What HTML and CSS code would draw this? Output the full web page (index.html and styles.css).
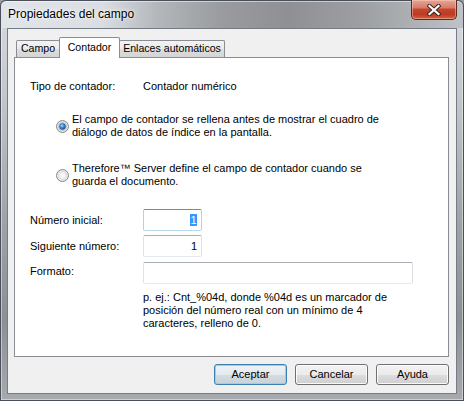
FILE: index.html
```html
<!DOCTYPE html>
<html lang="es">
<head>
<meta charset="utf-8">
<title>Propiedades del campo</title>
<link rel="stylesheet" href="styles.css">
</head>
<body>
<div class="window">
  <div class="titlebar">
    <span class="title">Propiedades del campo</span>
    <div class="close" aria-label="Cerrar">
      <svg width="14" height="12" viewBox="0 0 14 12">
        <path d="M2.5 2 L11.5 10 M11.5 2 L2.5 10" stroke="#3a2520" stroke-width="4.2" stroke-linecap="square" fill="none"/>
        <path d="M2.5 2 L11.5 10 M11.5 2 L2.5 10" stroke="#ffffff" stroke-width="2.2" stroke-linecap="square" fill="none"/>
      </svg>
    </div>
  </div>
  <div class="client">
    <div class="tabs">
      <div class="tab tab-campo">Campo</div>
      <div class="tab tab-contador active">Contador</div>
      <div class="tab tab-enlaces">Enlaces automáticos</div>
    </div>
    <div class="panel">
      <div class="info-row">
        <span class="label">Tipo de contador:</span>
        <span>Contador numérico</span>
      </div>
      <div class="radio-row first">
        <svg class="radio" width="13" height="13" viewBox="0 0 13 13">
          <defs>
            <radialGradient id="rbg" cx="0.5" cy="0.5" r="0.6">
              <stop offset="0" stop-color="#ffffff"/>
              <stop offset="0.6" stop-color="#e8e8e8"/>
              <stop offset="1" stop-color="#cfcfcf"/>
            </radialGradient>
            <radialGradient id="dot" cx="0.4" cy="0.35" r="0.7">
              <stop offset="0" stop-color="#b4e0ff"/>
              <stop offset="0.45" stop-color="#3d8fd8"/>
              <stop offset="1" stop-color="#124f93"/>
            </radialGradient>
          </defs>
          <circle cx="6.5" cy="6.5" r="6" fill="url(#rbg)" stroke="#8a8d91" stroke-width="1"/>
          <circle cx="6.5" cy="6.5" r="4" fill="#e4e6e8" stroke="#b0b4b8" stroke-width="0.8"/>
          <circle cx="6.5" cy="6.5" r="3" fill="url(#dot)" stroke="#2a5d8f" stroke-width="0.6"/>
        </svg>
        <span class="radio-text">El campo de contador se rellena antes de mostrar el cuadro de<br>diálogo de datos de índice en la pantalla.</span>
      </div>
      <div class="radio-row second">
        <svg class="radio" width="13" height="13" viewBox="0 0 13 13">
          <defs>
            <radialGradient id="rbg2" cx="0.5" cy="0.5" r="0.6">
              <stop offset="0" stop-color="#fafafa"/>
              <stop offset="0.6" stop-color="#ececec"/>
              <stop offset="1" stop-color="#d2d2d2"/>
            </radialGradient>
          </defs>
          <circle cx="6.5" cy="6.5" r="6" fill="url(#rbg2)" stroke="#8a8d91" stroke-width="1"/>
          <circle cx="6.5" cy="6.5" r="4" fill="none" stroke="#d6d8da" stroke-width="0.8"/>
        </svg>
        <span class="radio-text">Therefore™ Server define el campo de contador cuando se<br>guarda el documento.</span>
      </div>
      <div class="fields">
        <div class="field">
          <span class="label">Número inicial:</span>
          <div class="input num focused"><span class="selected">1</span></div>
        </div>
        <div class="field">
          <span class="label">Siguiente número:</span>
          <div class="input num">1</div>
        </div>
        <div class="field field-format">
          <span class="label">Formato:</span>
          <div class="input wide"></div>
        </div>
      </div>
      <p class="hint">p. ej.: Cnt_%04d, donde %04d es un marcador de<br>posición del número real con un mínimo de 4<br>caracteres, relleno de 0.</p>
    </div>
    <div class="buttons">
      <div class="btn default">Aceptar</div>
      <div class="btn">Cancelar</div>
      <div class="btn">Ayuda</div>
    </div>
  </div>
</div>
</body>
</html>
```

FILE: styles.css
```css
* { box-sizing: border-box; }

html, body {
  margin: 0;
  padding: 0;
  width: 464px;
  height: 401px;
  overflow: hidden;
  background: #9a9ea3;
}

body {
  font-family: "Liberation Sans", Arial, sans-serif;
  font-size: 11px;
  line-height: 13px;
  color: #000;
}

.window {
  width: 464px;
  height: 401px;
  border-radius: 6px 6px 0 0;
  background: linear-gradient(180deg, #d9dde2 0%, #c2c6cb 25%, #9fa2a6 55%, #8c8f93 80%, #a7aaae 100%);
  box-shadow: inset 0 0 0 1px #4a5059, inset 0 0 0 2px rgba(255,255,255,0.45);
  display: flex;
  flex-direction: column;
}

.titlebar {
  height: 28px;
  display: flex;
  justify-content: space-between;
  align-items: flex-start;
  padding-left: 8px;
  border-radius: 6px 6px 0 0;
  background: linear-gradient(90deg, #e1e5ea 0%, #dadde1 22%, #b3b6ba 34%, #999b9e 48%, #8e9093 62%, #9d9fa2 78%, #bfc2c6 100%);
  box-shadow: inset 0 1px 0 #4a5059, inset 1px 0 0 #4a5059, inset -1px 0 0 #4a5059, inset 0 2px 0 rgba(255,255,255,0.5);
}

.title {
  font-size: 12px;
  line-height: 15px;
  padding-top: 7px;
  color: #000;
  text-shadow: 0 0 6px rgba(255,255,255,0.9), 0 0 3px rgba(255,255,255,0.9);
}

.close {
  width: 46px;
  height: 20px;
  margin-right: 7px;
  margin-top: 0;
  border: 1px solid #5a2b22;
  border-top: none;
  border-radius: 0 0 5px 5px;
  background: linear-gradient(180deg, #e6a598 0%, #d97b68 40%, #c5452c 50%, #bd3a22 75%, #d4603f 100%);
  box-shadow: inset 0 0 0 1px rgba(255,210,200,0.45);
  display: flex;
  align-items: center;
  justify-content: center;
}

.client {
  margin: 0 7px;
  height: 366px;
  border: 1px solid #747c86;
  background: #f0f0f0;
  padding: 8px 7px 0 6px;
  display: flex;
  flex-direction: column;
}

.tabs {
  height: 20px;
  display: flex;
  align-items: flex-end;
  padding-left: 2px;
}

.tab {
  height: 17px;
  border: 1px solid #898c95;
  border-bottom: none;
  border-radius: 2px 2px 0 0;
  background: linear-gradient(180deg, #f3f3f3 0%, #ebebeb 50%, #dedede 51%, #d4d4d4 100%);
  text-align: center;
  padding-top: 1px;
  font-size: 10.6px;
  white-space: nowrap;
}

.tab + .tab { margin-left: -1px; }

.tab-campo { width: 44px; }
.tab-contador { width: 61px; }
.tab-enlaces { width: 106px; }

.tab.active {
  height: 21px;
  margin-bottom: -1px;
  background: #ffffff;
  position: relative;
  z-index: 1;
  padding-top: 3px;
}

.panel {
  height: 300px;
  border: 1px solid #898c95;
  background: #ffffff;
  padding: 22px 0 0 15px;
}

.info-row {
  display: flex;
}

.label {
  width: 113px;
  flex: none;
  white-space: nowrap;
}

.radio-row {
  display: flex;
  align-items: center;
  padding-left: 26px;
  gap: 3px;
}

.radio-row.first { margin-top: 20px; }
.radio-row.second { margin-top: 23px; }

.radio { flex: none; display: block; }

.radio-text { white-space: nowrap; }

.fields {
  margin-top: 21px;
  display: flex;
  flex-direction: column;
  gap: 4px;
}

.field {
  display: flex;
  align-items: center;
}

.field-format {
  align-items: flex-start;
  margin-top: 1px;
}

.field-format .label { padding-top: 3px; }

.input {
  height: 22px;
  background: #fff;
  border: 1px solid;
  border-color: #abadb3 #dbdfe6 #e3e9ef #e2e3ea;
  border-radius: 2px;
  line-height: 20px;
  text-align: right;
  padding-right: 4px;
}

.input.num { width: 59px; }
.input.wide { width: 270px; }

.input.focused {
  border-color: #5f8fbb #b5cfe7 #b7d9ed #b5cfe7;
}

.selected {
  background: #3399ff;
  color: #fff;
  padding: 0 0.5px;
}

.hint {
  margin: 7px 0 0 113px;
}

.buttons {
  margin-top: 7px;
  display: flex;
  justify-content: flex-end;
  gap: 8px;
}

.btn {
  width: 73px;
  height: 21px;
  border: 1px solid #707070;
  border-radius: 3px;
  background: linear-gradient(180deg, #f2f2f2 0%, #ebebeb 50%, #dddddd 51%, #cfcfcf 100%);
  box-shadow: inset 0 0 0 1px rgba(255,255,255,0.85);
  text-align: center;
  line-height: 19px;
}

.btn.default {
  border-color: #3c7fb1;
  background: linear-gradient(180deg, #eef3f6 0%, #e4eaee 50%, #d3dce2 51%, #c8d2d9 100%);
  box-shadow: inset 0 0 0 1px #8fd3f2;
}
```
